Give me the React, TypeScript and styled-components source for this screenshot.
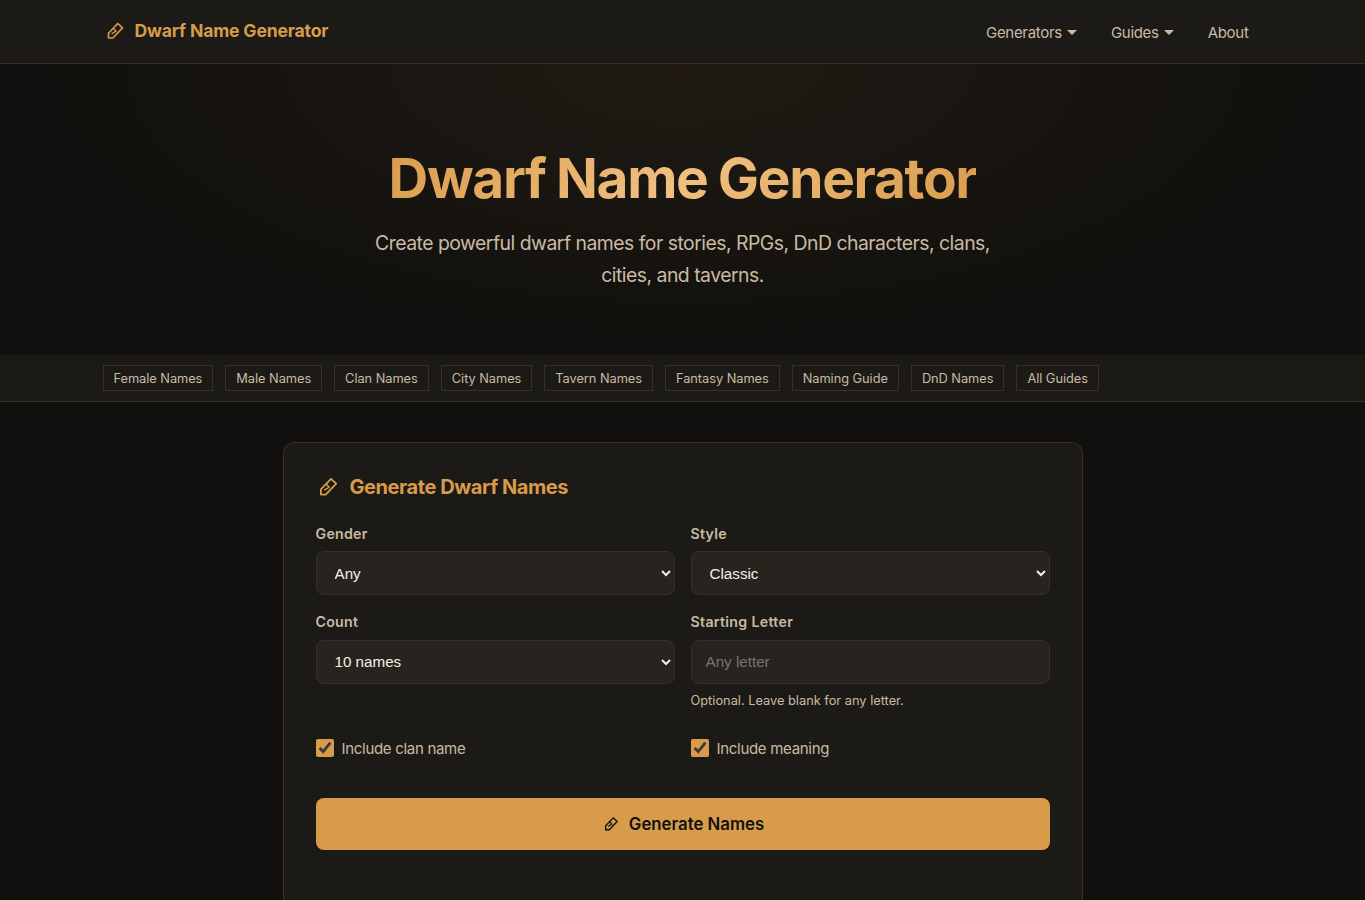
import React from "react";
import styled, { createGlobalStyle } from "styled-components";

const GlobalStyle = createGlobalStyle`
  *, *::before, *::after { box-sizing: border-box; }
  body {
    margin: 0;
    background: #11100e;
    color: #c9bba3;
    font-family: Inter, "Liberation Sans", sans-serif;
    font-size: 16px;
    line-height: 1.6;
  }
  h1, h2, p { margin: 0; }
  a { color: inherit; text-decoration: none; }
`;

const Header = styled.header`
  height: 64px;
  background: #1c1a16;
  border-bottom: 1px solid #3a2f28;
`;

const HeaderInner = styled.div`
  width: 1160px;
  height: 63px;
  margin: 0 auto;
  display: flex;
  align-items: center;
  justify-content: space-between;
  padding: 0 14px 0 1px;
`;

const Brand = styled.a`
  display: flex;
  align-items: center;
  gap: 9px;
  color: #d89b4a;
  font-weight: 700;
  font-size: 17.6px;
  letter-spacing: -0.18px;
`;

const Nav = styled.nav`
  display: flex;
  gap: 34px;
  padding-top: 2px;
  font-size: 15px;
  letter-spacing: -0.3px;
`;

const NavItem = styled.a`
  display: flex;
  align-items: center;
  gap: 5px;
`;

const Caret = styled.span`
  border: 5px solid transparent;
  border-top-color: currentColor;
  border-bottom: 0;
`;

const Hero = styled.section`
  height: 291px;
  padding-top: 81px;
  text-align: center;
  background: radial-gradient(ellipse at 50% 0%, #201a13 0%, #11100e 70%);
`;

const Title = styled.h1`
  width: fit-content;
  margin: 0 auto;
  font-size: 55px;
  line-height: 67px;
  font-weight: 700;
  letter-spacing: -1.3px;
  word-spacing: -1.5px;
  color: transparent;
  background: linear-gradient(135deg, #d89b4a 0%, #f0c080 50%, #d89b4a 100%);
  background-clip: text;
  -webkit-background-clip: text;
`;

const Subtitle = styled.p`
  width: 640px;
  margin: 15px auto 0;
  font-size: 19.4px;
  line-height: 32px;
  letter-spacing: -0.51px;
`;

const LinkBar = styled.div`
  height: 47px;
  background: #1c1a16;
  border-bottom: 1px solid #37312a;
`;

const LinkRow = styled.nav`
  width: 1160px;
  height: 46px;
  margin: 0 auto;
  display: flex;
  align-items: center;
  gap: 12px;
`;

const LinkChip = styled.a`
  height: 26px;
  padding: 0 10px;
  border: 1px solid #3a2f28;
  font-size: 12.8px;
  line-height: 25px;
  letter-spacing: -0.04px;
  white-space: nowrap;
`;

const Card = styled.form`
  width: 800px;
  height: 458px;
  margin: 40px auto 0;
  padding: 30px 32px;
  border: 1px solid #3a2f28;
  border-bottom: 0;
  border-radius: 12px 12px 0 0;
  background: #1c1a16;
`;

const CardTitle = styled.h2`
  display: flex;
  align-items: center;
  gap: 10px;
  height: 28px;
  color: #d89b4a;
  font-size: 20px;
  font-weight: 700;
  letter-spacing: -0.42px;
`;

const Fields = styled.div`
  display: grid;
  grid-template-columns: 1fr 1fr;
  gap: 15px 16px;
  margin-top: 21px;
`;

const Field = styled.label`
  display: flex;
  flex-direction: column;
`;

const FieldLabel = styled.span`
  height: 23px;
  margin-bottom: 6px;
  font-size: 14.2px;
  line-height: 23px;
  font-weight: 600;
  letter-spacing: 0.25px;
`;

const controlStyles = `
  width: 100%;
  height: 44px;
  border: 1px solid #3a2f28;
  border-radius: 8px;
  background: #27231f;
  color: #f5efe4;
  font-family: "Liberation Sans", Arial, sans-serif;
  font-size: 15.2px;
`;

const Select = styled.select`
  ${controlStyles}
  padding: 0 0 0 14px;
`;

const Input = styled.input`
  ${controlStyles}
  padding: 0 14px;
  &::placeholder { color: #757575; }
`;

const WideField = styled(Field)`
  & > ${FieldLabel} { letter-spacing: 0.3px; }
`;

const Hint = styled.span`
  margin-top: 6px;
  font-size: 12.8px;
  line-height: 21px;
`;

const SecondRow = styled.div`
  display: grid;
  grid-template-columns: 1fr 1fr;
  gap: 16px;
  margin-top: 15.5px;
  & ${FieldLabel} { height: 22px; margin-bottom: 7px; line-height: 22px; }
`;

const Checks = styled.div`
  display: grid;
  grid-template-columns: 1fr 1fr;
  gap: 16px;
  margin-top: 25px;
`;

const Check = styled.label`
  display: flex;
  align-items: center;
  gap: 8px;
  height: 24px;
  font-size: 15px;
  line-height: 24px;
  letter-spacing: -0.3px;
`;

const CheckText = styled.span`
  padding-top: 2px;
`;

const CheckInput = styled.input`
  width: 18px;
  height: 18px;
  margin: 0;
  accent-color: #d89b4a;
`;

const Submit = styled.button`
  display: flex;
  align-items: center;
  justify-content: center;
  gap: 9px;
  width: 100%;
  height: 52px;
  margin-top: 38px;
  padding: 0 5px 0 6px;
  border: 0;
  border-radius: 8px;
  background: #d89b4a;
  color: #11100e;
  font: 600 16.8px Inter, sans-serif;
`;

const ChiselIcon = ({ size }: { size: number }) => (
  <svg width={size} height={size} viewBox="0 0 24 24" fill="none" stroke="currentColor" strokeWidth="1.8" strokeLinecap="round" strokeLinejoin="round" aria-hidden="true">
    <path d="M15 3.8l5.2 4.8L9.7 19.6H4.9v-5.2L15 3.8z" />
    <path d="M10.4 9.2l2.8 3L8.8 14.8" strokeWidth="1.5" />
  </svg>
);

const links = ["Female Names", "Male Names", "Clan Names", "City Names", "Tavern Names", "Fantasy Names", "Naming Guide", "DnD Names", "All Guides"];

export default function App() {
  return (
    <>
      <GlobalStyle />
      <Header>
        <HeaderInner>
          <Brand href="#"><ChiselIcon size={22} />Dwarf Name Generator</Brand>
          <Nav>
            <NavItem href="#">Generators<Caret /></NavItem>
            <NavItem href="#">Guides<Caret /></NavItem>
            <NavItem href="#">About</NavItem>
          </Nav>
        </HeaderInner>
      </Header>
      <Hero>
        <Title>Dwarf Name Generator</Title>
        <Subtitle>Create powerful dwarf names for stories, RPGs, DnD characters, clans, cities, and taverns.</Subtitle>
      </Hero>
      <LinkBar>
        <LinkRow>{links.map((name) => <LinkChip href="#" key={name}>{name}</LinkChip>)}</LinkRow>
      </LinkBar>
      <Card>
        <CardTitle><ChiselIcon size={24} />Generate Dwarf Names</CardTitle>
        <Fields>
          <Field><FieldLabel>Gender</FieldLabel><Select><option>Any</option></Select></Field>
          <Field><FieldLabel>Style</FieldLabel><Select><option>Classic</option></Select></Field>
        </Fields>
        <SecondRow>
          <Field><FieldLabel>Count</FieldLabel><Select><option>10 names</option></Select></Field>
          <WideField><FieldLabel>Starting Letter</FieldLabel><Input placeholder="Any letter" /><Hint>Optional. Leave blank for any letter.</Hint></WideField>
        </SecondRow>
        <Checks>
          <Check><CheckInput type="checkbox" defaultChecked /><CheckText>Include clan name</CheckText></Check>
          <Check><CheckInput type="checkbox" defaultChecked /><CheckText>Include meaning</CheckText></Check>
        </Checks>
        <Submit type="button"><ChiselIcon size={18} />Generate Names</Submit>
      </Card>
    </>
  );
}
